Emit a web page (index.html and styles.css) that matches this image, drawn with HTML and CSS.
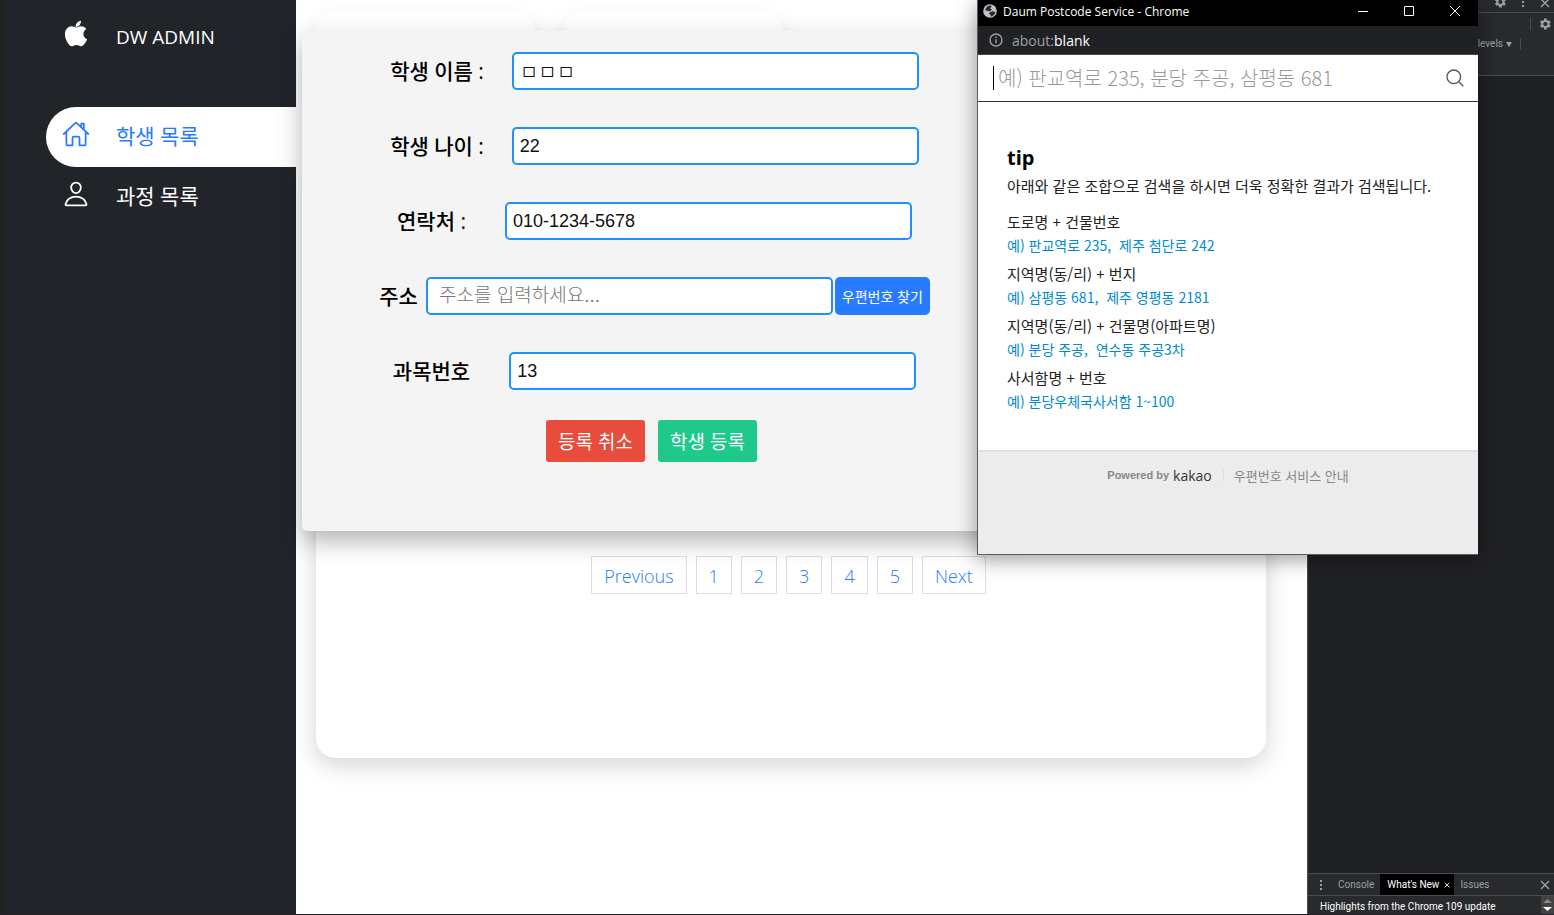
FILE: index.html
```html
<!DOCTYPE html>
<html lang="ko">
<head>
<meta charset="utf-8">
<title>DW ADMIN</title>
<link rel="stylesheet" href="styles.css">
</head>
<body>
<svg class="sprite" aria-hidden="true">
  <symbol id="gear" viewBox="2 2 20 20"><path d="M19.400 13a7.500 7.500 0 0 0 0-2l2.200-1.700-2.100-3.700-2.600 1.100a7.500 7.500 0 0 0-1.700-1L14.800 3h-4.300l-.4 2.700a7.500 7.500 0 0 0-1.700 1L5.800 5.600 3.700 9.300 5.900 11a7.500 7.500 0 0 0 0 2l-2.200 1.700 2.100 3.700 2.600-1.100a7.500 7.500 0 0 0 1.700 1l.4 2.700h4.300l.4-2.700a7.500 7.500 0 0 0 1.700-1l2.600 1.100 2.100-3.700zM12.600 15.500a3.500 3.500 0 1 1 0-7 3.500 3.500 0 0 1 0 7z" fill="currentColor"/></symbol>
  <symbol id="cross" viewBox="0 0 10 10"><path d="M1 1l8 8M9 1L1 9" fill="none" stroke="currentColor" stroke-width="1.400"/></symbol>
  <symbol id="dots" viewBox="0 0 4 12"><path d="M1 1h2v2H1zM1 5h2v2H1zM1 9h2v2H1z" fill="currentColor"/></symbol>
</svg>
<div class="app">
  <nav class="sidebar">
    <a class="brand" href="#">
      <svg class="nav-icon" viewBox="56 52 400 400" fill="currentColor"><path d="M333.600 142.300c-33.300 0-47.300 16-70.500 16-23.800 0-41.900-15.900-70.800-15.900-28.200 0-58.300 17.300-77.500 46.700-26.900 41.500-22.300 119.600 21.200 186.200 15.600 23.800 36.400 50.500 63.600 50.800h.5c23.700 0 30.700-15.500 63.300-15.700h.5c32.100 0 38.600 15.600 62.100 15.600h.5c27.300-.3 49.200-29.900 64.700-53.600 11.200-17 15.300-25.600 23.900-44.800-62.800-23.900-72.900-112.700-10.800-146.900-19-23.700-45.500-37.500-70.700-38.400zM326 64c-19.800 1.300-42.900 14-56.400 30.300-12.300 14.900-22.300 37-18.400 58.400h1.600c21.100 0 42.700-12.700 55.300-29 12.200-15.500 21.400-37.500 17.900-59.700z"/></svg>
      <span>DW ADMIN</span>
    </a>
    <ul class="nav-list">
      <li><a class="nav-link active" href="#">
        <svg class="nav-icon" viewBox="0 0 512 512" fill="none" stroke="currentColor" stroke-width="32" stroke-linecap="round" stroke-linejoin="round"><path d="M80 212v236a16 16 0 0 0 16 16h96V328a24 24 0 0 1 24-24h80a24 24 0 0 1 24 24v136h96a16 16 0 0 0 16-16V212M480 256L266.900 52c-5-5.300-16.700-5.300-21.800 0L32 256M400 179V64h-48v69"/></svg>
        <span>학생 목록</span></a></li>
      <li><a class="nav-link" href="#">
        <svg class="nav-icon" viewBox="0 0 512 512" fill="none" stroke="currentColor" stroke-width="32" stroke-linecap="round" stroke-linejoin="round"><path d="M344 144c-3.900 52.900-44 96-88 96s-84.200-43.100-88-96c-4-55 35-96 88-96s92 42 88 96z"/><path d="M256 304c-87 0-175.300 48-191.600 138.600C62.400 453.500 68.600 464 80 464h352c11.400 0 17.600-10.500 15.600-21.400C431.300 352 343 304 256 304z"/></svg>
        <span>과정 목록</span></a></li>
    </ul>
  </nav>

  <main class="main">
    <div class="stats"><div class="stat"></div><div class="stat"></div></div>
    <section class="panel">
      <nav class="pager" aria-label="pages">
        <a class="wide" href="#">Previous</a><a href="#">1</a><a href="#">2</a><a href="#">3</a><a href="#">4</a><a href="#">5</a><a href="#">Next</a>
      </nav>
    </section>

    <form class="modal">
      <div class="row"><label for="name">학생 이름 :</label><input id="name" class="hangul" type="text" value="ㅁㅁㅁ"></div>
      <div class="row"><label for="age">학생 나이 :</label><input id="age" type="text" value="22"></div>
      <div class="row long"><label for="phone">연락처 :</label><input id="phone" type="text" value="010-1234-5678"></div>
      <div class="row address"><label for="addr">주소</label><input id="addr" type="text" placeholder=" 주소를 입력하세요..."><button class="find" type="button">우편번호 찾기</button></div>
      <div class="row long"><label for="course">과목번호</label><input id="course" type="text" value="13"></div>
      <div class="actions"><button class="cancel" type="button">등록 취소</button><button class="submit" type="button">학생 등록</button></div>
    </form>
  </main>

  <aside class="devtools">
    <div class="dev-top">
      <svg class="i12"><use href="#gear"/></svg><svg class="dots"><use href="#dots"/></svg><svg class="i10"><use href="#cross"/></svg>
    </div>
    <div class="dev-mid"><i class="bar"></i><svg class="i12"><use href="#gear"/></svg></div>
    <div class="dev-filter"><span>levels</span><svg class="i6" viewBox="0 0 6 6"><path d="M0 1h6L3 6z" fill="currentColor"/></svg><i class="bar"></i></div>
    <div class="dev-body"></div>
    <div class="dev-tabs">
      <svg class="dots"><use href="#dots"/></svg>
      <button type="button">Console</button>
      <button type="button" class="on">What's New <svg class="i6"><use href="#cross"/></svg></button>
      <button type="button">Issues</button>
      <svg class="i10 end"><use href="#cross"/></svg>
    </div>
    <div class="dev-news"><span>Highlights from the Chrome 109 update</span>
      <svg class="scroll" viewBox="0 0 13 18"><path d="M0 0h13v18H0z" fill="#424242"/><path d="M2 7l4.500-4L11 7z" fill="#8a8a8a"/><path d="M2 11l4.500 4 4.500-4z" fill="#fff"/></svg>
    </div>
  </aside>
</div>

<section class="popup">
  <header class="titlebar">
    <svg class="i14" viewBox="0 0 14 14"><circle cx="7" cy="7" r="6.800" fill="#bdc1c6"/><path d="M7.500 1.400C9.500 2 8.500 3.300 7.500 3.600s-.3 1.400.8 1.500S8 7.200 6.700 7.200 4.500 6 2.500 6.500C2 4 4.500 1.400 7.500 1.400zM6.800 8.500c1.500-.4 2-1.200 3-1.200s1.300 1 2.600.7c-.3 2.500-2.400 4.300-4.800 4.500.5-1.300-.2-1.700-.9-2.200s-.7-1.500.1-1.800z" fill="#24272b"/></svg>
    <span class="title">Daum Postcode Service - Chrome</span>
    <button type="button" aria-label="minimize"><svg class="i10" viewBox="0 0 10 10"><path d="M0 5.500h10" stroke="#fff"/></svg></button>
    <button type="button" aria-label="maximize"><svg class="i10" viewBox="0 0 10 10"><path d="M.5.5h9v9h-9z" fill="none" stroke="#fff"/></svg></button>
    <button type="button" aria-label="close"><svg class="i10" viewBox="0 0 10 10"><path d="M0 0l10 10M10 0L0 10" stroke="#fff"/></svg></button>
  </header>
  <div class="urlbar">
    <svg class="i14" viewBox="0 0 14 14" fill="none" stroke="#9aa0a6" stroke-width="1.400"><circle cx="7" cy="7" r="6"/><path d="M7 6.200v4M7 3.500v1.400"/></svg>
    <span>about:<b>blank</b></span>
  </div>
  <div class="search">
    <i class="cursor"></i>
    <input type="text" aria-label="주소 검색" placeholder="예) 판교역로 235, 분당 주공, 삼평동 681">
    <svg class="lens" viewBox="0 0 18 18" fill="none" stroke="#555" stroke-width="1.300"><circle cx="7.800" cy="7.800" r="6.800"/><path d="M12.800 12.800l4.500 4.500"/></svg>
  </div>
  <div class="tips">
    <h2>tip</h2>
    <p class="lead">아래와 같은 조합으로 검색을 하시면 더욱 정확한 결과가 검색됩니다.</p>
    <dl>
      <dt>도로명 + 건물번호</dt><dd>예) 판교역로 235, &nbsp;제주 첨단로 242</dd>
      <dt>지역명(동/리) + 번지</dt><dd>예) 삼평동 681, &nbsp;제주 영평동 2181</dd>
      <dt>지역명(동/리) + 건물명(아파트명)</dt><dd>예) 분당 주공, &nbsp;연수동 주공3차</dd>
      <dt>사서함명 + 번호</dt><dd>예) 분당우체국사서함 1~100</dd>
    </dl>
  </div>
  <footer class="powered"><span class="by">Powered by</span><span class="kakao">kakao</span><i class="bar"></i><a href="#">우편번호 서비스 안내</a></footer>
</section>
</body>
</html>
```

FILE: styles.css
```css
* { box-sizing: border-box; }
body {
  margin: 0;
  font-family: "Open Sans", "Noto Sans CJK KR", sans-serif;
  background: #fff;
}
a { color: inherit; text-decoration: none; }
button { border: 0; padding: 0; background: none; color: inherit; font: inherit; }
svg { flex: none; display: block; }
.sprite { position: absolute; width: 0; height: 0; }
.i6 { width: 6px; height: 6px; }
.i10 { width: 10px; height: 10px; }
.i12 { width: 12px; height: 12px; }
.i14 { width: 14px; height: 14px; }
.dots { width: 4px; height: 12px; }

.app {
  display: flex;
  min-height: 100vh;
  border-bottom: 1px solid #262329;
}

/* Sidebar */
.sidebar {
  flex: none;
  width: 296px;
  padding: 7px 0 0 40px;
  border-left: 6px solid #222;
  background: #212529;
  color: #fff;
}
.brand, .nav-link {
  display: flex;
  align-items: center;
  gap: 26px;
  height: 60px;
  padding-left: 16px;
}
.brand { margin-bottom: 40px; font-size: 19px; }
.nav-link {
  padding-bottom: 4px;
  border-radius: 30px 0 0 30px;
  font-size: 21px;
}
.brand .nav-icon { margin-bottom: 6px; }
.nav-link .nav-icon { margin-bottom: 2px; }
.nav-list { margin: 0; padding: 0; list-style: none; }
.nav-link.active { background: #fff; color: #287bff; }
.nav-icon { width: 28px; height: 28px; }

/* Dashboard */
.main {
  position: relative;
  flex: 1;
  padding: 11px 41px 40px 20px;
}
.stats { display: flex; gap: 30px; }
.stat {
  width: 218px;
  height: 120px;
  border-radius: 20px;
  background: #fff;
  box-shadow: 0 7px 25px rgba(0, 0, 0, .08);
}
.panel {
  margin-top: 30px;
  padding: 395px 5px 164px 0;
  border-radius: 20px;
  background: #fff;
  box-shadow: 0 7px 25px rgba(0, 0, 0, .18);
}
.pager { display: flex; justify-content: center; gap: 9px; }
.pager a {
  min-width: 36px;
  height: 38px;
  padding: 0 12px;
  border: 1px solid #dcdcec;
  color: #287bff;
  font-size: 18px;
  font-weight: 300;
  line-height: 38px;
  text-align: center;
}
.pager .wide { min-width: 94px; }

/* Registration dialog */
.modal {
  position: absolute;
  left: 6px;
  top: 31px;
  width: 705px;
  padding: 21px 0 69px;
  border-radius: 5px;
  background: #f4f4f4;
  box-shadow: 0 10px 25px rgba(0, 0, 0, .3);
}
.row {
  display: flex;
  justify-content: center;
  align-items: center;
  gap: 28px;
  margin-bottom: 37px;
}
.row.long { gap: 39px; }
.row.address { gap: 2px; }
.row label { color: #000; font-size: 21px; font-weight: 500; line-height: 38px; }
.row.address label { margin-right: 6px; }
.row input {
  width: 407px;
  height: 38px;
  padding: 0 6px;
  border: 2px solid #1e90ff;
  border-radius: 5px;
  background: #fff;
  color: #111;
  font: 18px "Liberation Sans", "Noto Sans CJK KR", sans-serif;
}
.row .hangul { font-size: 20px; font-weight: 300; }
.row input::placeholder { color: #757575; font-size: 19px; font-weight: 300; }
.find {
  width: 95px;
  height: 38px;
  border-radius: 5px;
  background: #287bff;
  color: #fff;
  font-size: 14px;
}
.actions { display: flex; justify-content: center; gap: 13px; margin: -7px 6px 0 0; }
.actions button {
  width: 99px;
  height: 42px;
  border-radius: 3px;
  color: #fff;
  font-size: 19px;
}
.cancel { background: #e74c3c; }
.submit { background: #1fc98b; }

/* Developer tools */
.devtools {
  flex: none;
  display: flex;
  flex-direction: column;
  width: 247px;
  border-left: 1px solid #494c50;
  background: #292a2d;
  color: #9aa0a6;
  font-family: Roboto, sans-serif;
  font-size: 10px;
}
.bar { width: 1px; height: 12px; background: #4a4c50; }
.dev-top {
  display: flex;
  justify-content: flex-end;
  align-items: flex-end;
  gap: 15px;
  height: 13px;
  padding: 0 4px 4px 0;
  border-bottom: 1px solid #4a4c50;
  overflow: hidden;
}
.dev-mid { display: flex; justify-content: flex-end; align-items: center; gap: 8px; height: 21px; padding-right: 3px; }
.dev-filter {
  display: flex;
  justify-content: flex-end;
  align-items: center;
  gap: 3px;
  height: 42px;
  padding: 0 33px 22px 0;
  border-bottom: 1px solid #4a4c50;
}
.dev-filter .bar { margin-left: 5px; }
.dev-body { flex: 1; background: #202124; }
.dev-tabs {
  display: flex;
  align-items: center;
  height: 23px;
  padding: 0 4px 0 11px;
  border: solid #4a4c50;
  border-width: 1px 0;
}
.dev-tabs button { display: flex; align-items: center; gap: 5px; height: 21px; padding: 0 6px; }
.dev-tabs .dots + button { margin-left: 9px; }
.dev-tabs .on { padding: 0 4px 0 7px; background: #000; color: #fff; }
.dev-tabs .end { margin-left: auto; }
.dev-news { display: flex; justify-content: space-between; height: 18px; padding-left: 12px; color: #fff; line-height: 22px; }
.scroll { width: 13px; height: 18px; }

/* Postcode window */
.popup {
  position: absolute;
  top: 0;
  right: 76px;
  width: 501px;
  border: solid #5c5c5c;
  border-width: 0 0 1px 1px;
  background: #fff;
  box-shadow: 0 4px 20px rgba(0, 0, 0, .4);
}
.titlebar {
  display: flex;
  align-items: center;
  height: 26px;
  padding: 0 0 4px 5px;
  background: #000;
  color: #fff;
  font-size: 12px;
}
.title { flex: 1; padding-left: 6px; }
.titlebar button { display: flex; justify-content: center; width: 46px; }
.urlbar {
  display: flex;
  align-items: center;
  gap: 9px;
  height: 29px;
  padding-left: 11px;
  border-bottom: 1px solid #4a4a4a;
  background: #202124;
  color: #9aa0a6;
  font-size: 14px;
}
.urlbar b { color: #fff; font-weight: 400; }
.search {
  display: flex;
  align-items: center;
  height: 47px;
  padding: 0 14px 0 15px;
  border-bottom: 1px solid #333;
}
.cursor { width: 1px; height: 24px; background: #000; }
.search input {
  flex: 1;
  min-width: 0;
  height: 40px;
  padding: 0 4px 2px;
  border: 0;
  background: none;
  font: 300 20px "Noto Sans CJK KR", sans-serif;
}
.search input::placeholder { color: #999; }
.lens { width: 18px; height: 18px; }
.tips {
  padding: 42px 29px 32px;
  border-bottom: 2px solid #e0e0e0;
  color: #222;
  font-family: "Noto Sans CJK KR", sans-serif;
  font-size: 15px;
}
.tips h2 { margin: 0; color: #000; font: 700 20px/27px "Open Sans", sans-serif; }
.lead { margin: 3px 0 12px; line-height: 24px; white-space: nowrap; }
.tips dl { margin: 0; }
.tips dt { line-height: 24px; }
.tips dd { margin: 0 0 5px; color: #008bd3; font-size: 14px; line-height: 23px; }
.powered {
  display: flex;
  justify-content: center;
  align-items: center;
  height: 102px;
  padding-bottom: 56px;
  background: #ececec;
  color: #888;
}
.by { font: 700 11px "Liberation Sans", sans-serif; }
.kakao { margin: 0 11px 0 4px; color: #333; font-size: 14px; }
.powered .bar { margin-right: 10px; background: #ddd; }
.powered a { font: 13px "Noto Sans CJK KR", sans-serif; }
```
